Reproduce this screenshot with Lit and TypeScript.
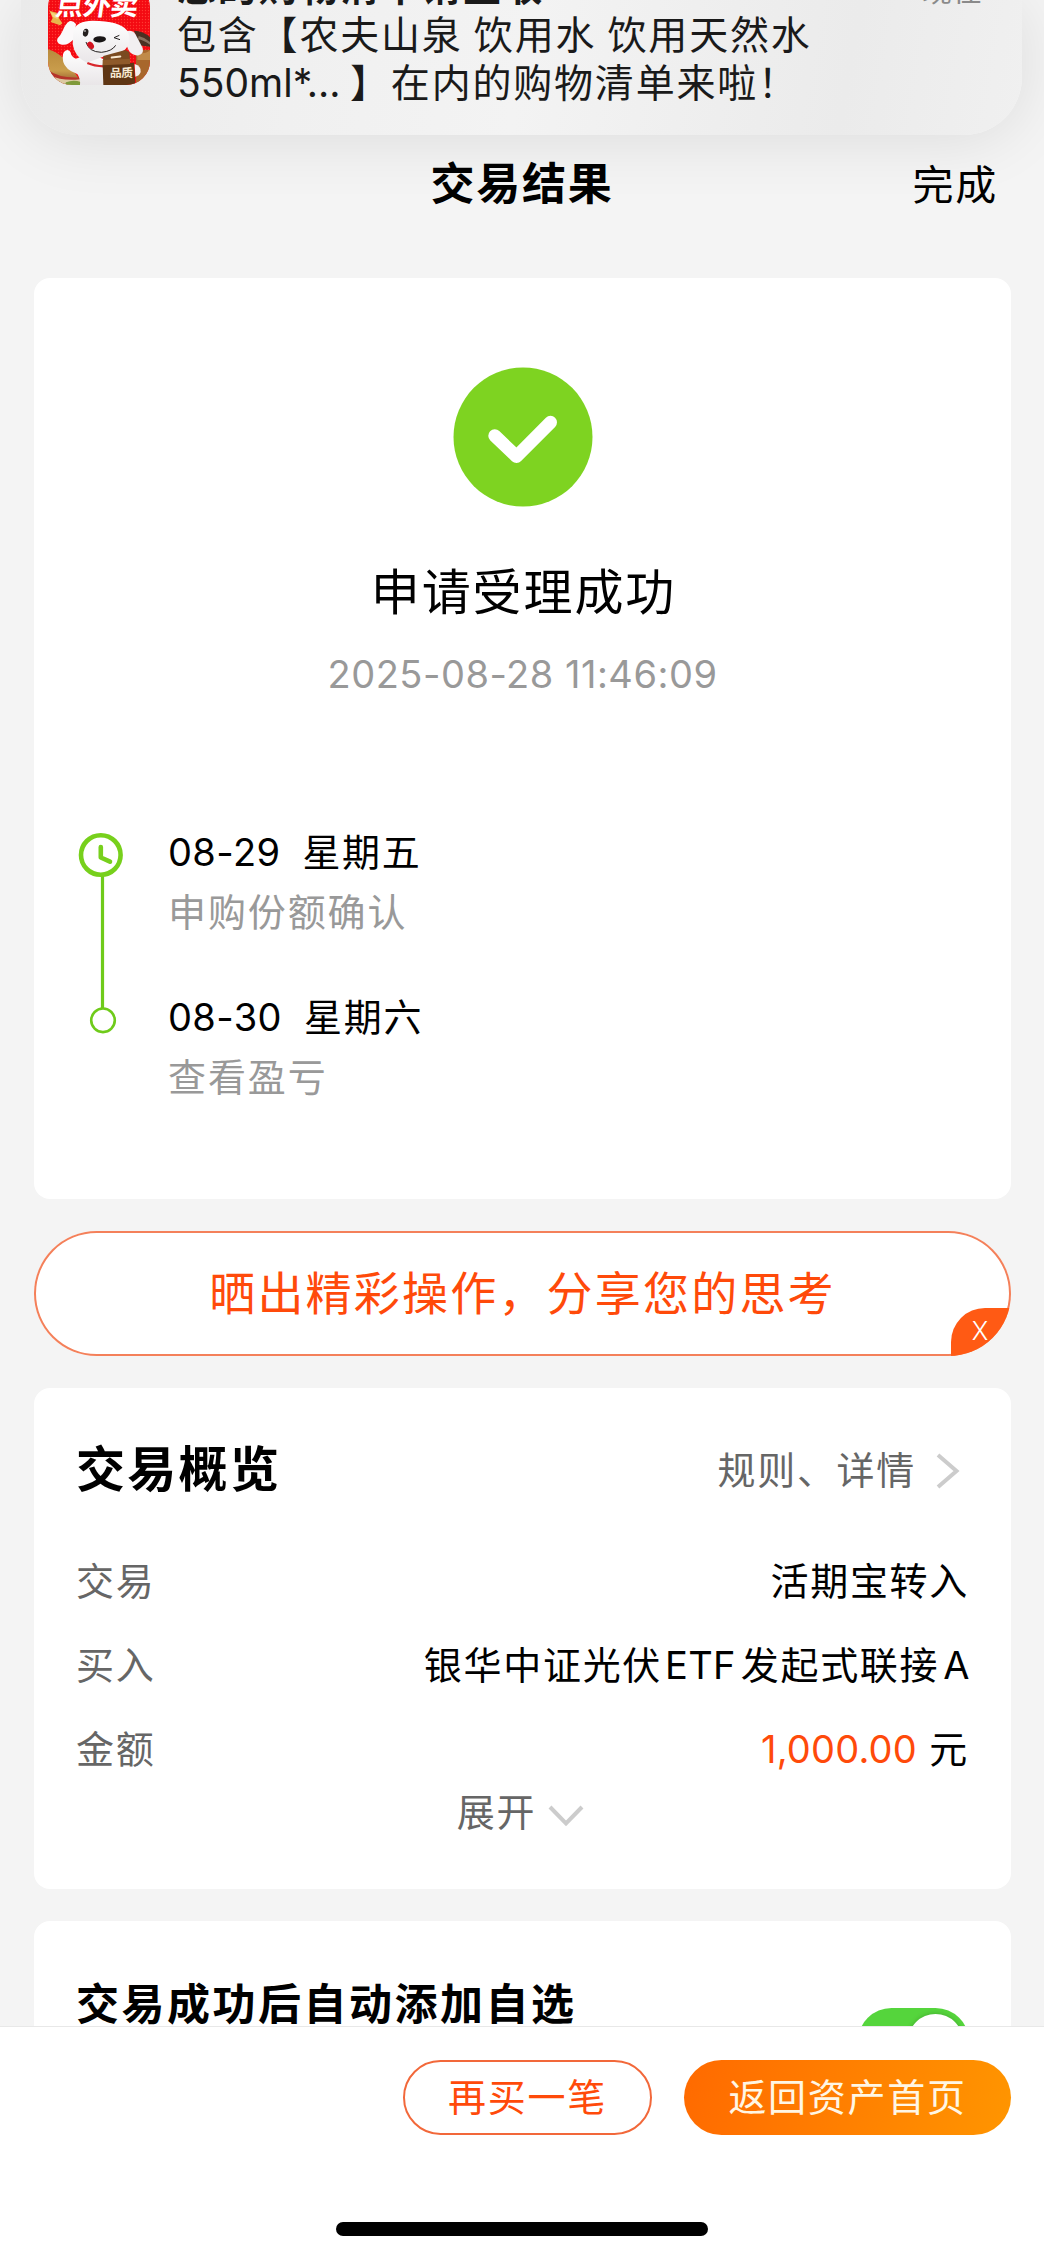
import { LitElement, html, css, svg } from "lit";
import { customElement } from "lit/decorators.js";

interface Step {
  date: string;
  day: string;
  note: string;
}

const STEPS: Step[] = [
  { date: "08-29", day: "星期五", note: "申购份额确认" },
  { date: "08-30", day: "星期六", note: "查看盈亏" },
];

const mascot = svg`
  <defs>
    <pattern id="dots" width="9" height="9" patternUnits="userSpaceOnUse">
      <rect width="9" height="9" fill="#f40a12" />
      <circle cx="4.5" cy="4.5" r="2" fill="#ff3a32" />
    </pattern>
    <linearGradient id="food" x1="0" y1="0" x2="0" y2="1">
      <stop offset="0" stop-color="#b98a3c" />
      <stop offset="0.6" stop-color="#c99d4c" />
      <stop offset="1" stop-color="#8b4a24" />
    </linearGradient>
    <linearGradient id="fur" x1="0" y1="0" x2="0" y2="1">
      <stop offset="0" stop-color="#ffffff" />
      <stop offset="1" stop-color="#e9e6e8" />
    </linearGradient>
  </defs>
  <rect x="54" y="-51" width="306" height="306" fill="url(#dots)" />
  <path d="M54 148 Q84 156 112 186 L160 255 H54 Z" fill="url(#food)" />
  <path d="M54 210 Q90 236 150 232 V243 Q90 248 54 224 Z" fill="#b5342a" />
  <path d="M60 226 Q96 244 150 238 V255 H70 Z" fill="#dcc9a0" />
  <path d="M108 247 Q130 238 152 246 V255 H104 Z" fill="#7f9a3a" />
  <path d="M312 92 Q340 92 360 112 V140 L328 136 Z" fill="#4b3022" />
  <path d="M326 108 Q344 112 360 126 V134 Q340 120 324 118 Z" fill="#8a7160" />
  <path d="M318 150 H360 V255 H318 Z" fill="#a8672c" />
  <path d="M322 158 Q346 164 360 150 V180 H322 Z" fill="#c08a48" />
  <path d="M58 32 L80 38 L88 56 L97 70 L90 76 L62 66 L68 54 Z" fill="#e8b44c" />
  <path d="M62 36 L78 42 L84 58 L68 50 Z" fill="#f5d27c" />
  <path d="M112 150 Q98 152 98 172 Q98 200 124 214 L142 222 Q152 236 150 255 H226 V180 L180 160 L138 176 Q124 170 122 158 Q120 150 112 150 Z" fill="url(#fur)" />
  <path d="M138 72 Q128 60 118 64 Q106 72 98 92 Q92 106 82 116 Q78 130 96 134 Q116 136 132 116 Z" fill="#fbf9fa" />
  <path d="M288 94 Q306 88 316 102 L338 144 Q342 162 326 166 Q308 168 298 154 Q288 138 288 116 Z" fill="#f2eff1" />
  <path d="M130 92 Q140 62 188 62 Q270 62 292 92 Q302 112 296 132 Q286 162 226 168 L170 188 Q134 172 128 132 Z" fill="url(#fur)" />
  <ellipse cx="167" cy="98" rx="8" ry="12" fill="#24201f" transform="rotate(14 167 98)" />
  <circle cx="165" cy="93" r="2.4" fill="#fff" />
  <ellipse cx="209" cy="118" rx="19" ry="9.5" fill="#191616" transform="rotate(-3 209 118)" />
  <path d="M268 106 L252 113 L270 119" fill="none" stroke="#24201f" stroke-width="3" />
  <path d="M168 126 Q176 156 214 157 Q246 154 257 136" fill="none" stroke="#24201f" stroke-width="3" />
  <path d="M170 132 Q178 118 188 130 Q198 142 186 148 Q176 146 170 132 Z" fill="#d31420" />
  <path d="M172 189 Q192 198 222 199" fill="none" stroke="#d9282c" stroke-width="7" />
  <path d="M220 168 L286 150 L298 156 L300 182 L218 202 Z" fill="#7a4a20" />
  <path d="M218 194 L312 188 L316 255 H220 Z" fill="#5f3614" />
  <path d="M218 180 L300 176 V192 L218 196 Z" fill="#8e5a2a" />
  <rect x="242" y="168" width="32" height="6" rx="3" fill="#f8e9d2" transform="rotate(-8 258 171)" />
  <path d="M314 192 Q334 198 332 216 Q328 228 316 230 Z" fill="#f5f0ee" />
`;

@customElement("notice-banner")
class NoticeBanner extends LitElement {
  static styles = css`
    :host {
      display: flex;
      height: 135px;
      margin: 0 22px 0 21px;
      border-radius: 0 0 58px 58px;
      background: linear-gradient(100deg, #eaeaea 0%, #f0f0f0 28%, #f3f3f3 50%, #ebebeb 82%, #f0f0f0 100%);
      box-shadow: 0 4px 64px rgba(0, 0, 0, 0.1);
      color: #1a1a1a;
    }
    .inner {
      flex: 1;
      display: flex;
      height: 135px;
      overflow: hidden;
      align-items: flex-end;
      padding: 0 40px 0 27px;
    }
    .icon {
      flex: none;
      width: 102px;
      height: 102px;
      margin-bottom: 50px;
      border-radius: 24px;
    }
    .copy {
      flex: 1;
      display: flex;
      flex-direction: column;
      margin: 0 0 28px 27px;
      font-size: 39px;
      line-height: 48px;
      letter-spacing: 1.8px;
      white-space: nowrap;
    }
    .head {
      display: flex;
      justify-content: space-between;
      height: 48px;
    }
    .title {
      font-weight: 700;
    }
    .when {
      font-size: 30px;
      letter-spacing: 0;
      padding-top: 3px;
      color: #8a8a8a;
    }
    .line {
      word-spacing: -1.5px;
    }
    .latin {
      letter-spacing: 0;
    }
  `;

  render() {
    return html`
      <div class="inner">
        <svg class="icon" viewBox="54 -51 306 306">
          ${mascot}
          <text x="80" y="44" font-family="Noto Sans CJK SC" font-weight="700" font-size="84" fill="#fff" transform="skewX(-8)" letter-spacing="-2">点外卖</text>
          <text x="240" y="231" font-family="Noto Sans CJK SC" font-weight="700" font-size="35" fill="#f7ead2" letter-spacing="-1">品质</text>
        </svg>
        <div class="copy">
          <div class="head"><span class="title">您的购物清单请查收</span><span class="when">现在</span></div>
          <div class="line">包含【农夫山泉 饮用水 饮用天然水</div>
          <div class="line"><span class="latin">550ml*... </span>】在内的购物清单来啦！</div>
        </div>
      </div>
    `;
  }
}

@customElement("app-root")
class AppRoot extends LitElement {
  static styles = css`
    :host {
      display: flex;
      flex-direction: column;
      width: 1044px;
      height: 2258px;
      overflow: hidden;
      background: #f4f4f4;
      color: #000;
      font-family: Inter, "Noto Sans CJK SC", sans-serif;
      font-size: 38px;
      line-height: 60px;
      letter-spacing: 1.7px;
      white-space: nowrap;
    }
    * {
      box-sizing: border-box;
    }
    .nav {
      display: grid;
      grid-template-columns: 1fr auto 1fr;
      align-items: center;
      height: 143px;
      padding: 0 46px 46px;
    }
    .nav-title {
      grid-column: 2;
      font-size: 44px;
      font-weight: 700;
    }
    .done {
      justify-self: end;
      font-size: 41px;
      padding-top: 3px;
    }
    .main {
      flex: 1;
      min-height: 0;
      overflow: hidden;
      display: flex;
      flex-direction: column;
      gap: 32px;
      padding: 0 33px 0 34px;
    }
    .card {
      flex: none;
      background: #fff;
      border-radius: 16px;
      padding: 0 42px;
    }
    .result {
      height: 921px;
      display: flex;
      flex-direction: column;
      align-items: center;
      padding-top: 89px;
    }
    .ok {
      width: 140px;
      height: 140px;
    }
    .result-title {
      margin-top: 56px;
      padding-left: 2px;
      font-size: 49px;
      letter-spacing: 1.9px;
    }
    .stamp {
      margin-top: 21px;
      color: #999;
      letter-spacing: 0.5px;
    }
    .timeline {
      align-self: stretch;
      display: flex;
      gap: 42px;
      margin-top: 118px;
    }
    .track {
      width: 50px;
      height: 220px;
    }
    .steps {
      display: flex;
      flex-direction: column;
      gap: 45px;
    }
    .when {
      display: flex;
      gap: 22px;
    }
    .num {
      letter-spacing: 0.4px;
    }
    .note {
      color: #999;
      letter-spacing: 1.9px;
    }
    .share {
      position: relative;
      flex: none;
      height: 125px;
      padding-bottom: 2px;
      border-radius: 63px;
      background: #fff;
      box-shadow: inset 0 0 0 2px #f4805a;
      color: #ff4a0a;
      display: flex;
      align-items: center;
      justify-content: center;
      font-size: 46px;
      letter-spacing: 2.2px;
      overflow: hidden;
    }
    .close {
      position: absolute;
      right: 0;
      bottom: 0;
      width: 60px;
      height: 48px;
      padding-right: 2px;
      border-radius: 34px 0 0 0;
      background: #ff5a14;
      color: #fff;
      font-size: 25px;
      font-weight: 300;
      line-height: 46px;
      letter-spacing: 0;
      text-align: center;
    }
    .overview {
      height: 501px;
      padding-top: 52px;
    }
    .row {
      display: flex;
      justify-content: space-between;
      align-items: center;
      height: 60px;
      margin-bottom: 24px;
    }
    .row.top {
      margin-bottom: 51px;
    }
    .heading {
      font-size: 49px;
      font-weight: 700;
      letter-spacing: 2.3px;
    }
    .muted {
      color: #666;
    }
    .link {
      display: flex;
      align-items: center;
      gap: 17px;
      padding-right: 8px;
    }
    .chev {
      width: 28px;
      height: 42px;
      margin-top: 2px;
    }
    .amount {
      color: #ff4a0a;
      letter-spacing: 0.2px;
    }
    .fund {
      margin-right: -1px;
    }
    .fund-code {
      margin: 0 5px 0 3px;
      letter-spacing: 0.3px;
    }
    .fund-class {
      margin-left: 4px;
      letter-spacing: 0.5px;
    }
    .expand {
      display: flex;
      justify-content: center;
      align-items: center;
      gap: 11px;
      margin-top: -21px;
      padding-right: 3px;
    }
    .down {
      width: 38px;
      height: 28px;
      margin-top: 7px;
    }
    .watch {
      height: 200px;
      padding-top: 53px;
      display: flex;
      justify-content: space-between;
      align-items: flex-start;
    }
    .watch-title {
      font-size: 43px;
      font-weight: 700;
      letter-spacing: 2.5px;
    }
    .switch {
      width: 111px;
      height: 67px;
      margin-top: 34px;
      padding: 6px;
      border-radius: 34px;
      background: #55d53c;
      display: flex;
      justify-content: flex-end;
    }
    .knob {
      width: 55px;
      height: 55px;
      border-radius: 50%;
      background: #fff;
      box-shadow: 0 0 5px rgba(0, 0, 0, 0.22);
    }
    .footer {
      flex: none;
      height: 232px;
      background: #fff;
      border-top: 1px solid #e8e8e8;
      display: flex;
      flex-direction: column;
      align-items: center;
      justify-content: space-between;
      padding: 33px 33px 22px;
    }
    .actions {
      align-self: stretch;
      display: flex;
      justify-content: flex-end;
      gap: 32px;
    }
    .btn {
      height: 75px;
      padding-bottom: 2px;
      border-radius: 38px;
      display: flex;
      align-items: center;
      justify-content: center;
    }
    .again {
      width: 249px;
      border: 2px solid #f2683a;
      color: #ff4a0a;
    }
    .home {
      width: 327px;
      background: linear-gradient(100deg, #ff6a00, #ff9500);
      color: #fff6e4;
    }
    .bar {
      width: 372px;
      height: 14px;
      border-radius: 7px;
      background: #000;
    }
  `;

  render() {
    return html`
      <notice-banner></notice-banner>
      <div class="nav">
        <span class="nav-title">交易结果</span>
        <span class="done">完成</span>
      </div>
      <div class="main">
        <section class="card result">
          <svg class="ok" viewBox="0 0 140 140">
            <circle cx="70" cy="70" r="69.5" fill="#7ed321" />
            <path d="M41.8 68.8 L63.5 89.5 L97.5 55.3" fill="none" stroke="#fff" stroke-width="13" stroke-linecap="round" stroke-linejoin="round" />
          </svg>
          <div class="result-title">申请受理成功</div>
          <div class="stamp">2025-08-28 11:46:09</div>
          <div class="timeline">
            <svg class="track" viewBox="0 0 50 220">
              <path d="M26.5 54 V187" stroke="#6fcb1a" stroke-width="3.2" />
              <circle cx="24.8" cy="33" r="19.8" fill="#fff" stroke="#77d01c" stroke-width="4.6" />
              <path d="M24.8 25 V35.5 L34 39.7" fill="none" stroke="#77d01c" stroke-width="4.6" stroke-linecap="round" stroke-linejoin="round" />
              <circle cx="27" cy="198.3" r="11.8" fill="#fff" stroke="#6fcb1a" stroke-width="2.6" />
            </svg>
            <div class="steps">
              ${STEPS.map(
                (s) => html`<div>
                  <div class="when"><span class="num">${s.date}</span><span>${s.day}</span></div>
                  <div class="note">${s.note}</div>
                </div>`
              )}
            </div>
          </div>
        </section>

        <div class="share">晒出精彩操作，分享您的思考<span class="close">X</span></div>

        <section class="card overview">
          <div class="row top">
            <span class="heading">交易概览</span>
            <span class="link muted">规则、详情
              <svg class="chev" viewBox="0 0 28 42">
                <path d="M5 5 L23.5 21 L5 37" fill="none" stroke="#ccc" stroke-width="4" />
              </svg>
            </span>
          </div>
          <div class="row"><span class="muted">交易</span><span>活期宝转入</span></div>
          <div class="row">
            <span class="muted">买入</span>
            <span class="fund">银华中证光伏<span class="fund-code">ETF</span>发起式联接<span class="fund-class">A</span></span>
          </div>
          <div class="row"><span class="muted">金额</span><span><span class="amount">1,000.00</span> 元</span></div>
          <div class="expand muted">展开
            <svg class="down" viewBox="0 0 38 28">
              <path d="M3 5 L19 21.5 L35 5" fill="none" stroke="#ccc" stroke-width="4" />
            </svg>
          </div>
        </section>

        <section class="card watch">
          <span class="watch-title">交易成功后自动添加自选</span>
          <span class="switch"><span class="knob"></span></span>
        </section>
      </div>
      <div class="footer">
        <div class="actions">
          <span class="btn again">再买一笔</span>
          <span class="btn home">返回资产首页</span>
        </div>
        <div class="bar"></div>
      </div>
    `;
  }
}
